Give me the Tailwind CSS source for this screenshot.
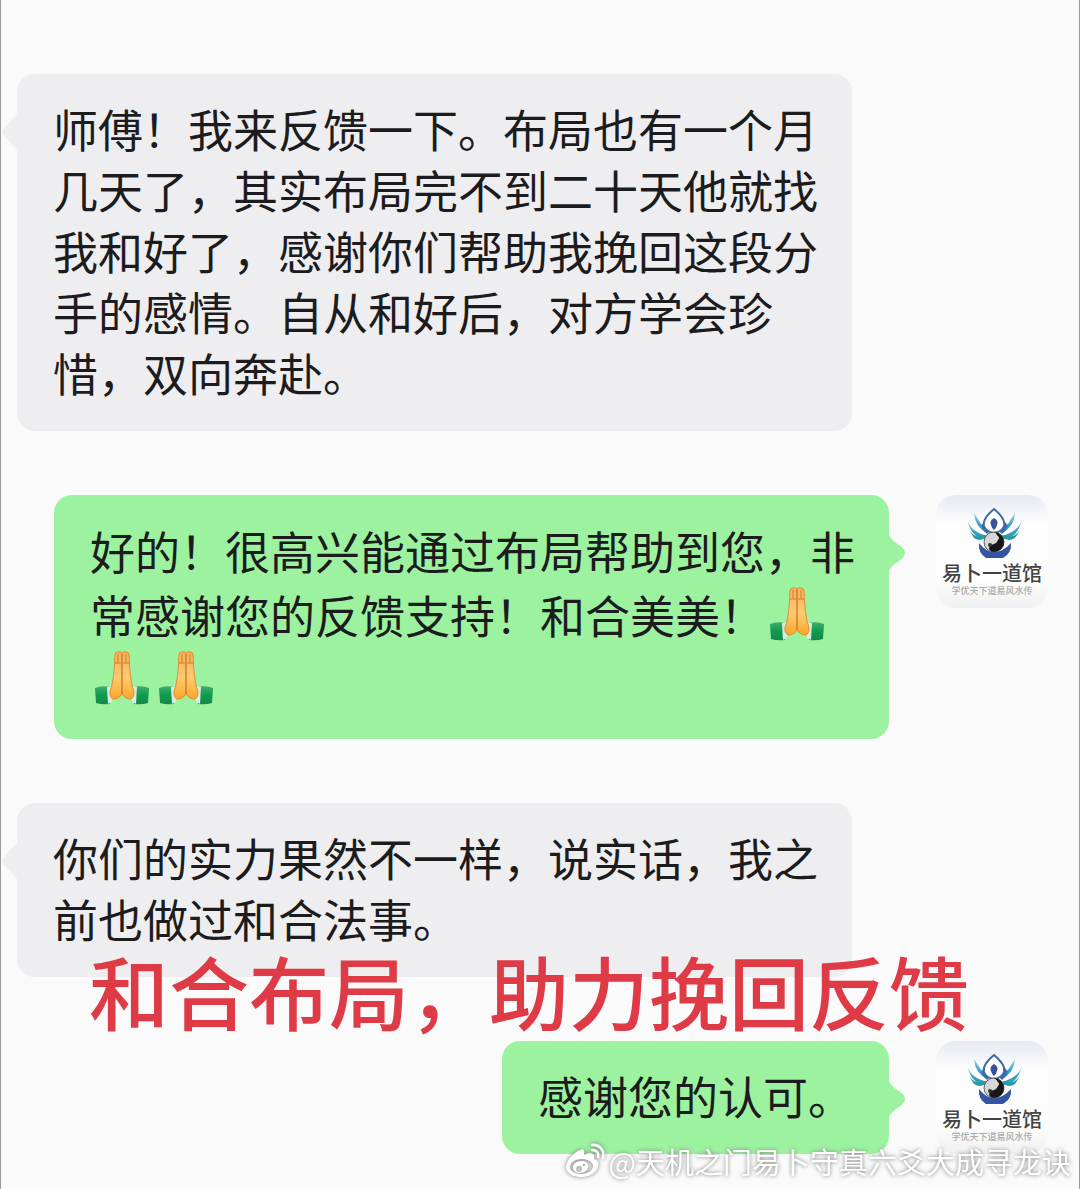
<!DOCTYPE html>
<html lang="zh-CN">
<head>
  <meta charset="UTF-8">
  <meta name="viewport" content="width=device-width, initial-scale=1.0">
  <title>和合布局反馈</title>
  <script src="https://cdn.jsdelivr.net/npm/@tailwindcss/browser@4"></script>
</head>
<body class="bg-[#fafafa] font-['Noto_Sans_CJK_SC',sans-serif] text-[#1c1c1e]">

  <!-- Shared drawings -->
  <svg class="absolute h-0 w-0" aria-hidden="true">
    <defs>
      <linearGradient id="skin" x1="0" y1="0" x2="0" y2="1">
        <stop offset="0" stop-color="#f5b25c"/><stop offset=".55" stop-color="#ffcb70"/><stop offset="1" stop-color="#f9a62b"/>
      </linearGradient>
      <linearGradient id="sleeve" x1="0" y1="0" x2="0" y2="1">
        <stop offset="0" stop-color="#3fae6b"/><stop offset=".5" stop-color="#0f9a4e"/><stop offset="1" stop-color="#16884a"/>
      </linearGradient>
      <linearGradient id="card" x1="0" y1="0" x2="0" y2="1">
        <stop offset="0" stop-color="#e6e9f1"/><stop offset=".25" stop-color="#fdfdfe"/><stop offset=".75" stop-color="#fdfdfd"/><stop offset="1" stop-color="#f0f0f0"/>
      </linearGradient>
      <linearGradient id="wing" x1="0" y1="0" x2="0" y2="1">
        <stop offset="0" stop-color="#8fd6e6"/><stop offset=".6" stop-color="#3a9fc4"/><stop offset="1" stop-color="#2c9fa6"/>
      </linearGradient>
      <symbol id="pray" viewBox="0 0 56 54">
        <path d="M1 37 Q8 34 17 36 L16 53 Q8 54 2 52Z" fill="url(#sleeve)"/>
        <path d="M55 37 Q48 34 39 36 L40 53 Q48 54 54 52Z" fill="url(#sleeve)"/>
        <path d="M13 36 L17 35 L18 51 L14 53Z" fill="#d9eee3"/>
        <path d="M43 36 L39 35 L38 51 L42 53Z" fill="#d9eee3"/>
        <path d="M21 4 Q21 1 24 1 Q27 0 28 2 L28 43 Q25 48 19 48 Q14 45 17 37 Q20 30 21 4Z" fill="url(#skin)" stroke="#e38b33"/>
        <path d="M35 4 Q35 1 32 1 Q29 0 28 2 L28 43 Q31 48 37 48 Q42 45 39 37 Q36 30 35 4Z" fill="url(#skin)" stroke="#e38b33"/>
        <path d="M28 3V43M21 12H27M29 12H35M24 3V12M32 3V12" stroke="#d47a2e" fill="none"/>
      </symbol>
      <symbol id="logo" viewBox="0 0 112 113">
        <rect width="112" height="113" rx="20" fill="url(#card)"/>
        <g fill="url(#wing)">
          <path d="M31 24 Q34 37 52 41 Q50 45 45 44 Q34 39 31 24Z"/>
          <path d="M86 24 Q83 37 65 41 Q67 45 72 44 Q83 39 86 24Z"/>
          <path d="M38 18 Q39 32 51 38 Q43 26 38 18Z"/>
          <path d="M79 18 Q78 32 66 38 Q74 26 79 18Z"/>
          <path d="M33 35 Q40 45 51 40 Q46 48 38 43Z" fill="#299ca4"/>
          <path d="M84 35 Q77 45 66 40 Q71 48 79 43Z" fill="#299ca4"/>
        </g>
        <path d="M45 22 Q44 34 51 39 L54 36 Q49 29 57 20 Q48 24 45 32Z M72 22 Q73 34 66 39 L63 36 Q68 29 60 20 Q69 24 72 32Z" fill="#3d68b7"/>
        <path d="M58 14 Q70 24 68 31 Q66 37 58 38 Q50 37 48 31 Q46 24 58 14Z" fill="#fff" stroke="#3f6c9e" stroke-width="2"/>
        <path d="M58 23 Q63 26 61 30 Q60 34 58 35 Q56 34 55 30 Q53 26 58 23Z" fill="#36529f"/>
        <path d="M43 48 Q50 57 58 57 Q67 57 75 48 Q76 58 67 63 H50 Q42 58 43 48Z" fill="#3554a5"/>
        <circle cx="58" cy="47" r="10" fill="#d7d7d7" stroke="#5c5f68"/>
        <path d="M58 37 A10 10 0 0 1 58 57 Q51 56 54 50 Q62 49 62 44 Q62 39 58 37Z" fill="#171719"/>
        <circle cx="61" cy="43" r="2" fill="#ddd"/><circle cx="54" cy="50" r="2" fill="#333"/>
      </symbol>
    </defs>
  </svg>

  <main class="relative flex min-h-screen flex-col gap-16 overflow-hidden border-x border-[#999] pt-[74px] pb-8 text-[45px] leading-[61px]">

    <div class="flex pl-4">
      <div class="relative max-w-[835px] rounded-[18px] bg-[#eeeef0] pt-6 pr-8 pb-7 pl-9">
        <svg class="absolute top-10 -left-4 h-9 w-4" viewBox="0 0 16 36" fill="#eeeef0" aria-hidden="true"><path d="M16 0V36L2 21Q0 18 2 15Z"/></svg>
        <p>师傅！我来反馈一下。布局也有一个月几天了，其实布局完不到二十天他就找我和好了，感谢你们帮助我挽回这段分手的感情。自从和好后，对方学会珍惜，双向奔赴。</p>
      </div>
    </div>

    <div class="flex items-start justify-end gap-[47px] pr-[31px]">
      <div class="relative max-w-[835px] rounded-[18px] bg-[#9cf29f] pt-6 pr-8 pb-7 pl-9">
        <svg class="absolute top-10 -right-4 h-9 w-4" viewBox="0 0 16 36" fill="#9cf29f" aria-hidden="true"><path d="M0 0Q3 6 10 10Q16 14 16 18Q16 22 10 26Q3 30 0 36Z"/></svg>
        <p class="leading-[64px]">好的！很高兴能通过布局帮助到您，非常感谢您的反馈支持！和合美美！<svg class="mx-1 -mt-4 inline h-[54px] w-14" role="img" aria-label="合十"><use href="#pray"/></svg><svg class="mx-1 -mt-4 inline h-[54px] w-14" role="img" aria-label="合十"><use href="#pray"/></svg><svg class="mx-1 -mt-4 inline h-[54px] w-14" role="img" aria-label="合十"><use href="#pray"/></svg></p>
      </div>
      <div class="relative h-[113px] w-28 shrink-0 text-center font-medium text-[#444]">
        <svg class="h-full w-full" aria-hidden="true"><use href="#logo"/></svg>
        <div class="absolute inset-x-0 top-[66px] text-[20px] leading-6">易卜一道馆</div>
        <div class="absolute inset-x-0 top-[90px] text-[9px] leading-3 text-[#aaa]">学优天下道易风水传</div>
      </div>
    </div>

    <div class="relative flex pl-4">
      <div class="relative max-w-[835px] rounded-[18px] bg-[#eeeef0] pt-6 pr-8 pb-7 pl-9">
        <svg class="absolute top-10 -left-4 h-9 w-4" viewBox="0 0 16 36" fill="#eeeef0" aria-hidden="true"><path d="M16 0V36L2 21Q0 18 2 15Z"/></svg>
        <p>你们的实力果然不一样，说实话，我之前也做过和合法事。</p>
      </div>
      <!-- Caption over the chat -->
      <h1 class="absolute -bottom-[52px] left-[88px] text-[80px] leading-20 font-medium whitespace-nowrap text-[#de3b47]">和合布局，助力挽回反馈</h1>
    </div>

    <div class="flex items-start justify-end gap-[47px] pr-[31px]">
      <div class="relative max-w-[835px] rounded-[18px] bg-[#9cf29f] px-9 pt-6 pb-7">
        <svg class="absolute top-10 -right-4 h-9 w-4" viewBox="0 0 16 36" fill="#9cf29f" aria-hidden="true"><path d="M0 0Q3 6 10 10Q16 14 16 18Q16 22 10 26Q3 30 0 36Z"/></svg>
        <p>感谢您的认可。</p>
      </div>
      <div class="relative h-[113px] w-28 shrink-0 text-center font-medium text-[#444]">
        <svg class="h-full w-full" aria-hidden="true"><use href="#logo"/></svg>
        <div class="absolute inset-x-0 top-[66px] text-[20px] leading-6">易卜一道馆</div>
        <div class="absolute inset-x-0 top-[90px] text-[9px] leading-3 text-[#aaa]">学优天下道易风水传</div>
      </div>
    </div>

    <!-- Watermark -->
    <div class="absolute right-2 bottom-2 flex items-center gap-1 text-[29px] leading-10 text-white drop-shadow-[0_0_2px_#777]">
      <svg class="h-9 w-10" viewBox="0 0 40 36" fill="none" stroke="#fff" stroke-linecap="round" aria-hidden="true">
        <path fill="#fff" stroke="none" fill-rule="evenodd" d="M15 7C19 5 20 8 19 12C24 9 31 10 29 16C33 17 34 20 33 24C31 30 24 34 16 34C8 34 1 30 1 24C1 18 9 9 15 7Z M17 16C9 16 5 20 5 24C5 28 10 31 16 31C23 31 28 27 28 23C28 19 23 16 17 16Z"/>
        <path fill="#fff" stroke="none" fill-rule="evenodd" d="M17 18C11 18 8 21 8 25C8 28 11 30 15 30C20 30 23 27 23 23C23 20 21 18 17 18Z M14 23A3 3 0 1 0 14 29A3 3 0 1 0 14 23Z M19 21A1 1 0 1 0 19 23A1 1 0 1 0 19 21Z"/>
        <path stroke-width="2.5" d="M27 2C34 1 40 7 38 15M27 7C32 7 34 10 33 14"/>
      </svg>
      <span>@天机之门易卜守真六爻大成寻龙诀</span>
    </div>
  </main>
</body>
</html>
